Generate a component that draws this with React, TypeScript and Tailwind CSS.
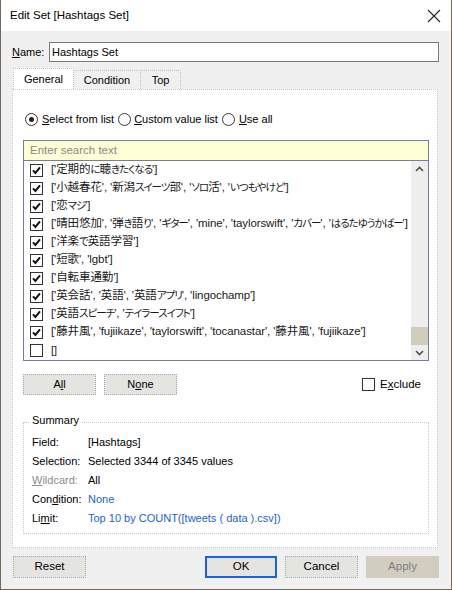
import React from 'react';

const rows = [
  "['定期的に聴きたくなる']",
  "['小越春花', '新潟スイーツ部', 'ソロ活', 'いつもやけど']",
  "['恋マジ']",
  "['晴田悠加', '弾き語り', 'ギター', 'mine', 'taylorswift', 'カバー', 'はるたゆうかばー']",
  "['洋楽で英語学習']",
  "['短歌', 'lgbt']",
  "['自転車通勤']",
  "['英会話', '英語', '英語アプリ', 'lingochamp']",
  "['英語スピーチ', 'テイラースイフト']",
  "['藤井風', 'fujiikaze', 'taylorswift', 'tocanastar', '藤井風', 'fujiikaze']",
];

// kana runs are set smaller and tighter, like the narrow UI font in the dialog
function ListText({ text }: { text: string }) {
  const parts = text.split(/([\u3040-\u30ff]+)/);
  return (
    <span className="ml-[8px] whitespace-nowrap text-[11.5px] text-[#1a1a1a] tracking-[-0.1px] [font-feature-settings:'palt']">
      {parts.map((p, i) =>
        /[\u3040-\u30ff]/.test(p) ? (
          <span key={i} className="text-[10.5px] tracking-[-1px]">
            {p}
          </span>
        ) : (
          <span key={i}>{p}</span>
        )
      )}
    </span>
  );
}

function CheckBox({ checked }: { checked?: boolean }) {
  return (
    <div className="w-[13px] h-[13px] shrink-0 border border-[#333] bg-white flex items-center justify-center">
      {checked && (
        <svg width="11" height="11" viewBox="0 0 11 11">
          <path d="M2 5.3 L4.4 8 L9 2.4" fill="none" stroke="#111" strokeWidth="2" />
        </svg>
      )}
    </div>
  );
}

function Radio({ on }: { on?: boolean }) {
  return (
    <div className="w-[13px] h-[13px] shrink-0 rounded-full border border-[#333] bg-white flex items-center justify-center">
      {on && <div className="w-[5px] h-[5px] rounded-full bg-[#222]" />}
    </div>
  );
}

function Btn({ children, className = '' }: { children: React.ReactNode; className?: string }) {
  return (
    <div
      className={`h-[21px] w-[73px] flex items-center justify-center bg-[#e4e4e0] border border-dotted border-[#a9a9a9] ${className}`}
    >
      {children}
    </div>
  );
}

function SummaryRow({ label, value, muted, link }: { label: React.ReactNode; value: string; muted?: boolean; link?: boolean }) {
  return (
    <div className="h-[19px] flex items-center pl-[2px]">
      <div className={`w-[56px] ${muted ? 'text-[#8c8c8c]' : ''}`}>{label}</div>
      <div className={link ? 'text-[#1c5fd8]' : ''}>{value}</div>
    </div>
  );
}

export default function App() {
  return (
    <div className="w-[452px] h-[590px] flex flex-col bg-[#f0f0f0] border-x border-b border-[#74685e] text-[11px] leading-none text-black font-['Liberation_Sans','Noto_Sans_CJK_JP',sans-serif]">
      {/* title bar */}
      <div className="h-[31px] shrink-0 bg-white flex items-center justify-between pl-[9px] pr-[10px]">
        <span className="text-[11.5px]">Edit Set [Hashtags Set]</span>
        <svg width="14" height="14" viewBox="0 0 14 14">
          <path d="M1 1 L13 13 M13 1 L1 13" stroke="#222" strokeWidth="1.1" />
        </svg>
      </div>

      <div className="flex flex-col pl-[11px] pr-[12px]">
        {/* name */}
        <div className="mt-[11px] h-[20px] flex items-center">
          <span className="w-[37px]">
            <span className="underline">N</span>ame:
          </span>
          <div className="flex-1 h-[20px] border border-[#7a7a7a] bg-white flex items-center px-[2px]">Hashtags Set</div>
        </div>

        {/* tabs */}
        <div className="mt-[6px] h-[21px] flex items-end pl-[1px]">
          <div className="w-[61px] h-[21px] bg-white border border-b-0 border-dotted border-[#c0c0c0] flex items-center justify-center">
            General
          </div>
          <div className="w-[67px] h-[19px] border border-b-0 border-l-0 border-dotted border-[#c0c0c0] flex items-center justify-center">
            Condition
          </div>
          <div className="w-[40px] h-[19px] border border-b-0 border-l-0 border-dotted border-[#c0c0c0] flex items-center justify-center">
            Top
          </div>
        </div>

        {/* panel */}
        <div className="h-[459px] mr-[1px] bg-white border border-dotted border-[#c8c8c8] flex flex-col">
          <div className="mt-[21px] h-[16px] flex items-center pl-[12px]">
            <Radio on />
            <span className="ml-[4px]">
              <span className="underline">S</span>elect from list
            </span>
            <span className="ml-[4px]"><Radio /></span>
            <span className="ml-[3px]">
              <span className="underline">C</span>ustom value list
            </span>
            <span className="ml-[4px]"><Radio /></span>
            <span className="ml-[4px]">
              <span className="underline">U</span>se all
            </span>
          </div>

          {/* list */}
          <div className="mt-[13px] ml-[10px] w-[406px] h-[221px] border border-[#7b7b9c] flex flex-col">
            <div className="h-[20px] shrink-0 bg-[#ffffd6] border-b border-[#7b7b9c] flex items-center pl-[6px] text-[11.5px] text-[#8a8a8a]">
              Enter search text
            </div>
            <div className="flex-1 flex">
              <div className="flex-1 flex flex-col overflow-hidden">
                {rows.map((r) => (
                  <div key={r} className="h-[18px] flex items-center pl-[6px]">
                    <CheckBox checked />
                    <ListText text={r} />
                  </div>
                ))}
                <div className="h-[18px] flex items-center pl-[6px]">
                  <CheckBox />
                  <span className="ml-[8px] text-[#1a1a1a]">[]</span>
                </div>
              </div>
              <div className="w-[17px] shrink-0 bg-[#eeeeec] flex flex-col items-center">
                <svg className="mt-[5px]" width="9" height="6" viewBox="0 0 9 6">
                  <path d="M1 5 L4.5 1.5 L8 5" fill="none" stroke="#5a4f4f" strokeWidth="1.6" />
                </svg>
                <div className="flex-1" />
                <div className="w-[17px] h-[18px] bg-[#cfccbb]" />
                <svg className="mt-[5px] mb-[4px]" width="9" height="6" viewBox="0 0 9 6">
                  <path d="M1 1 L4.5 4.5 L8 1" fill="none" stroke="#5a4f4f" strokeWidth="1.6" />
                </svg>
              </div>
            </div>
          </div>

          {/* all / none / exclude */}
          <div className="mt-[13px] flex items-center pl-[10px] pr-[16px]">
            <Btn>
              <span>
                A<span className="underline">l</span>l
              </span>
            </Btn>
            <Btn className="ml-[8px]">
              <span>
                N<span className="underline">o</span>ne
              </span>
            </Btn>
            <div className="flex-1" />
            <CheckBox />
            <span className="ml-[5px] text-[11.5px]">
              E<span className="underline">x</span>clude
            </span>
          </div>

          {/* summary */}
          <fieldset className="mt-[20px] ml-[10px] w-[406px] h-[119px] border border-dotted border-[#c8c8c8] pl-[6px]">
            <legend className="px-[2px] h-[14px]">Summary</legend>
            <div className="mt-[4px] flex flex-col">
              <SummaryRow label="Field:" value="[Hashtags]" />
              <SummaryRow label="Selection:" value="Selected 3344 of 3345 values" />
              <SummaryRow
                muted
                label={
                  <span>
                    <span className="underline">W</span>ildcard:
                  </span>
                }
                value="All"
              />
              <SummaryRow
                link
                label={
                  <span>
                    Con<span className="underline">d</span>ition:
                  </span>
                }
                value="None"
              />
              <SummaryRow
                link
                label={
                  <span>
                    Li<span className="underline">m</span>it:
                  </span>
                }
                value="Top 10 by COUNT([tweets ( data ).csv])"
              />
            </div>
          </fieldset>
        </div>

        {/* bottom buttons */}
        <div className="mt-[8px] flex items-center pl-[1px] text-[11.5px]">
          <Btn className="h-[22px]">Reset</Btn>
          <div className="flex-1" />
          <div className="w-[72px] h-[22px] flex items-center justify-center bg-[#e4e4e0] border-2 border-[#1f5fe0]">OK</div>
          <Btn className="h-[22px] ml-[8px]">Cancel</Btn>
          <div className="ml-[8px] w-[73px] h-[22px] flex items-center justify-center bg-[#d1cebf] text-[#7c7c90]">Apply</div>
        </div>
      </div>
    </div>
  );
}
